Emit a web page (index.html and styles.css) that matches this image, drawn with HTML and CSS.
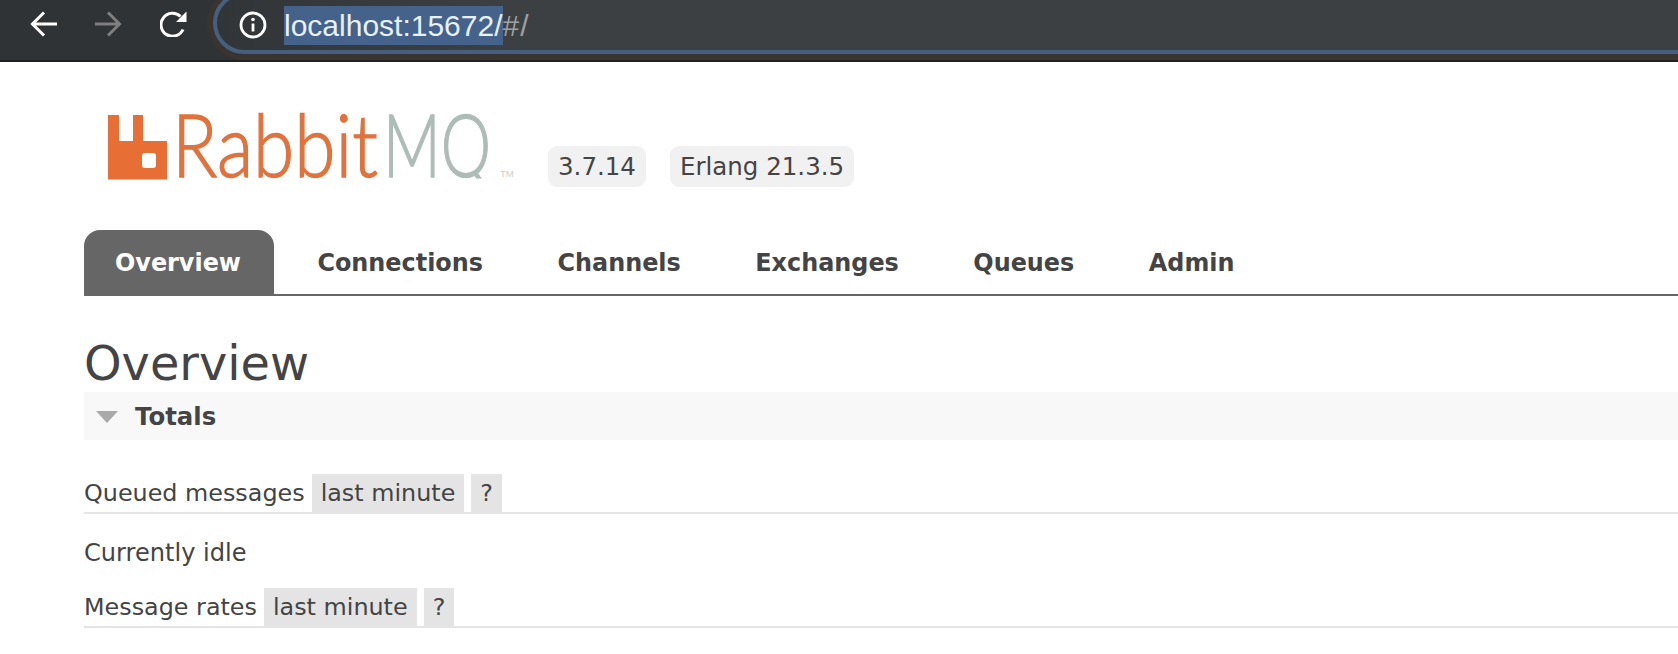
FILE: index.html
```html
<!DOCTYPE html>
<html lang="en">
<head>
<meta charset="utf-8">
<title>RabbitMQ Management</title>
<link rel="stylesheet" href="styles.css">
</head>
<body>
<header class="chrome">
  <div class="nav-buttons">
    <svg class="nav-icon" viewBox="0 0 27 26"><path d="M27 13H2.5M14 1.500 2.500 13 14 24.500"/></svg>
    <svg class="nav-icon dim" viewBox="0 0 27 26"><path d="M0 13h24.500M13 1.500 24.500 13 13 24.500"/></svg>
    <svg class="nav-icon" viewBox="0 0 27 26"><path d="M23 18.500A11.500 11.500 0 1 1 20.500 5.500"/><path class="solid" d="M26.500 0.500v10.500H16z"/></svg>
  </div>
  <div class="omnibox">
    <svg class="info" viewBox="0 0 28 28"><circle cx="14" cy="14" r="12"/><path d="M14 12.500v8"/><circle class="dot" cx="14" cy="8.500" r="1.800"/></svg>
    <span class="url"><span class="url-selected">localhost:15672/</span><span class="url-rest">#/</span></span>
  </div>
</header>
<main class="page">
  <div class="brand">
    <svg class="logo" viewBox="0 0 440 76">
      <defs><clipPath id="baseline-clip"><rect x="0" y="0" width="440" height="65.500"/></clipPath></defs>
      <path class="logo-mark" d="M0 2h11v26h14V2h10v26h24v38.500H0zM34 43v9a3 3 0 0 0 3 3h8a3 3 0 0 0 3-3v-9a3 3 0 0 0-3-3h-8a3 3 0 0 0-3 3z" fill-rule="evenodd"/>
      <text class="logo-word orange" transform="translate(64 64) scale(.86 1)">Rabbit</text>
      <g clip-path="url(#baseline-clip)"><text class="logo-word grey" transform="translate(275 64) scale(.73 1)">MQ</text></g>
      <text class="logo-tm" x="392" y="64">TM</text>
    </svg>
    <span class="badge">3.7.14</span>
    <span class="badge">Erlang 21.3.5</span>
  </div>
  <nav class="tabs">
    <a class="tab active">Overview</a>
    <a class="tab">Connections</a>
    <a class="tab">Channels</a>
    <a class="tab">Exchanges</a>
    <a class="tab">Queues</a>
    <a class="tab">Admin</a>
  </nav>
  <h1 class="title">Overview</h1>
  <section>
    <h2 class="section-head"><span class="caret"></span>Totals</h2>
    <div class="section-body">
      <h3 class="row-head">Queued messages <span class="pill">last minute</span><span class="pill">?</span></h3>
      <p class="idle">Currently idle</p>
      <h3 class="row-head">Message rates <span class="pill">last minute</span><span class="pill">?</span></h3>
    </div>
  </section>
</main>
</body>
</html>
```
FILE: styles.css
```css
* { box-sizing: border-box; }
html, body { margin: 0; padding: 0; background: #fff; overflow: hidden; }
body { font-family: "DejaVu Sans", Verdana, sans-serif; color: #444; height: 654px; }

.chrome {
  height: 62px;
  background: #303336;
  border-bottom: 2px solid #1f2221;
  display: flex;
  align-items: flex-start;
  overflow: hidden;
}
.nav-buttons {
  width: 213px;
  flex: none;
  display: flex;
  gap: 38px;
  padding: 11px 0 0 30px;
}
.nav-icon { width: 27px; height: 26px; fill: none; stroke: #fff; stroke-width: 3; flex: none; }
.nav-icon.dim { stroke: #7d7f81; }
.nav-icon .solid { fill: #fff; stroke: none; }
.omnibox {
  flex: 1;
  height: 62px;
  margin: -8px -40px 0 0;
  padding-left: 22px;
  display: flex;
  align-items: flex-start;
  background: linear-gradient(90deg, #323538 0, #3c4043 20%);
  border: 4px solid #44607e;
  border-radius: 31px;
  box-shadow: 0 0 0 6px #3a3431;
}
.info { width: 28px; height: 28px; margin-top: 15px; fill: none; stroke: #fff; stroke-width: 2.800; flex: none; }
.info .dot { fill: #fff; stroke: none; }
.url {
  margin: 10px 0 0 17px;
  font: 30px/39px "Liberation Sans", Arial, sans-serif;
  white-space: nowrap;
}
.url-selected { background: #44628a; color: #e8f0fa; display: inline-block; }
.url-rest { color: #9ea1a4; letter-spacing: 1px; }

.page { padding-left: 84px; }
.brand { display: flex; align-items: flex-start; height: 168px; padding-left: 24px; }
.logo { width: 440px; height: 76px; margin-top: 51px; flex: none; overflow: visible; }
.logo-mark { fill: #e76f35; }
.logo-word { font: 300 87px Lato, "Open Sans", sans-serif; stroke-width: 1.400px; }
.orange { fill: #e0733d; stroke: #e0733d; }
.grey { fill: #aebcb8; stroke: #aebcb8; }
.logo-tm { font: 9.500px "Liberation Sans", sans-serif; fill: #c8d0ce; }
.badge {
  margin: 84px 24px 0 0;
  height: 41px;
  padding: 0 10px;
  background: #f1f1f1;
  border-radius: 9px;
  font-size: 24.500px;
  line-height: 42px;
  flex: none;
}

.tabs {
  display: flex;
  height: 66px;
  border-bottom: 2px solid #666;
}
.tab {
  height: 66px;
  padding: 0 31px;
  margin-right: 12.500px;
  font-size: 23.900px;
  font-weight: bold;
  line-height: 66px;
  color: #444;
}
.tab.active {
  padding-right: 33px;
  background: #666;
  color: #fff;
  border-radius: 16px 16px 0 0;
}
.title {
  margin: 40px 0 0;
  font-size: 47.800px;
  line-height: 56px;
  font-weight: normal;
  color: #444;
}
.section-head {
  margin: 0;
  height: 48px;
  padding-top: 2px;
  background: #f8f8f8;
  display: flex;
  align-items: center;
  font-size: 24.400px;
  font-weight: bold;
  line-height: 46px;
}
.caret {
  width: 0;
  height: 0;
  margin: 0 17px 0 12px;
  border-left: 11px solid transparent;
  border-right: 11px solid transparent;
  border-top: 12px solid #aaa;
}
.section-body { padding-top: 34px; }
.row-head {
  margin: 0;
  height: 40px;
  font-size: 23.850px;
  font-weight: normal;
  line-height: 38px;
  border-bottom: 2px solid #e4e4e4;
  display: flex;
}
.pill {
  height: 38px;
  margin-left: 7px;
  padding: 0 9px;
  background: #e4e4e4;
}
.idle {
  margin: 0;
  height: 74px;
  font-size: 24.100px;
  line-height: 78px;
}
```
